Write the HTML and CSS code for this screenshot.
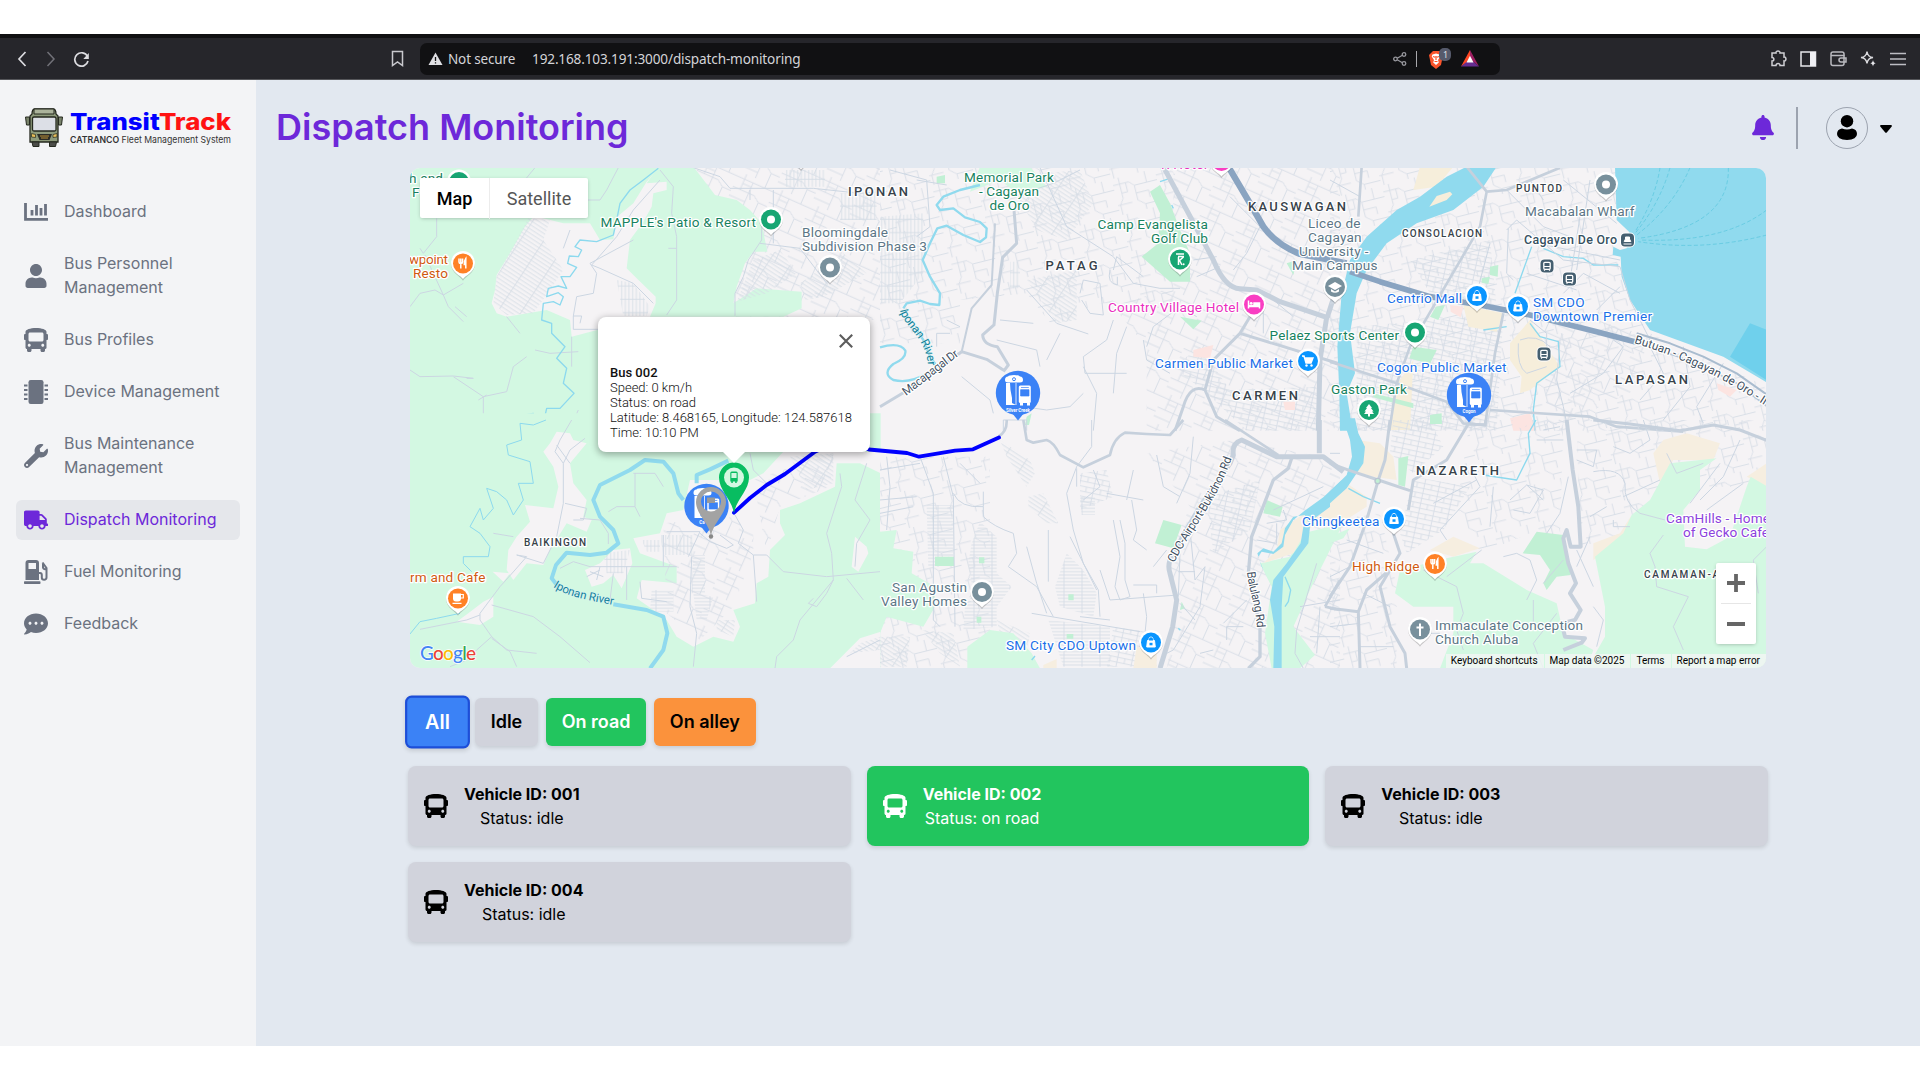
FILE: index.html
```html
<!DOCTYPE html>
<html lang="en">
<head>
<meta charset="utf-8">
<title>TransitTrack - Dispatch Monitoring</title>
<link rel="stylesheet" href="styles.css">
</head>
<body>
<svg class="defs" width="0" height="0">
  <defs>
    <symbol id="i-bus" viewBox="0 0 512 512"><path fill="currentColor" d="M488 128h-8V80c0-44.800-99.200-80-224-80S32 35.200 32 80v48h-8c-13.250 0-24 10.740-24 24v80c0 13.250 10.750 24 24 24h8v160c0 17.670 14.330 32 32 32v32c0 17.670 14.330 32 32 32h32c17.670 0 32-14.330 32-32v-32h192v32c0 17.670 14.330 32 32 32h32c17.670 0 32-14.330 32-32v-32h6.400c16 0 25.600-12.800 25.600-25.600V256h8c13.250 0 24-10.750 24-24v-80c0-13.260-10.750-24-24-24zM112 400c-17.670 0-32-14.330-32-32s14.330-32 32-32 32 14.330 32 32-14.330 32-32 32zm16-112c-17.670 0-32-14.330-32-32V128c0-17.670 14.330-32 32-32h256c17.670 0 32 14.330 32 32v128c0 17.670-14.330 32-32 32H128zm272 112c-17.670 0-32-14.330-32-32s14.330-32 32-32 32 14.330 32 32-14.330 32-32 32z"/></symbol>
    <g id="drop"><path d="M0 16.500C-2 12.500-12 9-12-.5A12 12 0 0 1 12-.5C12 9 2 12.500 0 16.500z" fill="#00000030" transform="translate(0 .8)"/><path d="M0 15.500C-2 12-12 9-12-.5A12 12 0 0 1 12-.5C12 9 2 12 0 15.500z" fill="#fff"/><circle r="10" fill="currentColor"/></g>
    <g id="p-dot"><use href="#drop"/><circle r="4" fill="#fff"/></g>
    <g id="p-food"><use href="#drop"/><path d="M-4-5v3.500q0 1.500 1.800 1.500t1.800-1.500V-5M-2.200-5V5M2.800 5V-5Q1.300-3 1.300 1h1.500" fill="none" stroke="#fff" stroke-width="1.500"/></g>
    <g id="p-shop"><use href="#drop"/><path d="M-4.300 4.500l.8-6.500h7l.8 6.500zM-2-2v-1.500a2 2 0 0 1 4 0V-2" fill="#fff" stroke="#fff"/><path d="M-2-2v-1.200a2 2 0 0 1 4 0V-2z" fill="currentColor"/><path d="M-1.500.300h3v2.500h-3z" fill="currentColor"/></g>
    <g id="p-cart"><use href="#drop"/><path d="M-6-5h2l2 7h5l2-5h-8" fill="#fff" stroke="#fff" stroke-width="1.400"/><circle cx="-1.500" cy="4.500" r="1.200" fill="#fff"/><circle cx="3.500" cy="4.500" r="1.200" fill="#fff"/></g>
    <g id="p-bed"><use href="#drop"/><path d="M-5.500-4V4M-5.500 2h11V4M5.500 3v-4.500H0V1h-5" fill="none" stroke="#fff" stroke-width="1.500"/><path d="M0-1.500h5.500V2H0z" fill="#fff"/><circle cx="-2.800" cy="-1.200" r="1.400" fill="#fff"/></g>
    <g id="p-school"><use href="#drop"/><path d="M-7-1L0-5 7-1 0 3z M-4 2v2.500q4 2.500 8 0V2L0 4.400z" fill="#fff"/></g>
    <g id="p-tree"><use href="#drop"/><path d="M0-6l3 4H2l2.500 3.500H3L5 4H1v2.500h-2V4h-4l2-2.500h-1.500L-2-2h-1z" fill="#fff"/></g>
    <g id="p-cross"><use href="#drop"/><path d="M0-6V6.500M-3.500-2h7" stroke="#fff" stroke-width="2"/></g>
    <g id="p-cup"><use href="#drop"/><path d="M-5-5h8v5q0 3-3 3h-2q-3 0-3-3zM-5.500 4.300h9v1.200h-9z" fill="#fff"/><path d="M3-4h2.300v3.500H3" fill="none" stroke="#fff" stroke-width="1.200"/></g>
    <g id="p-golf"><use href="#drop"/><path d="M-4-5.500h8M-2-3h6M-1.500-2.500V5.500M3.500-2.500l-4 3.500 2.500 4.500" fill="none" stroke="#fff" stroke-width="1.500"/><circle cx="3.600" cy="4.800" r="1" fill="#fff"/></g>
    <g id="stop"><rect x="-7.500" y="-7.500" width="15" height="15" rx="5" fill="#fff"/><rect x="-6.500" y="-6.500" width="13" height="13" rx="4" fill="#455f70"/><rect x="-3.200" y="-3.700" width="6.400" height="7" rx="1" fill="none" stroke="#fff" stroke-width="1.300"/><path d="M-3 .5h6M-2.500 3.500v1.200M2.500 3.500v1.200" stroke="#fff" stroke-width="1.200"/></g>
    <g id="terminal"><path d="M-6 20L0 27.500 6 20z" fill="#3b82f6"/><circle r="22.200" fill="#3b82f6"/><path d="M-13-13q0-3.500 3-3.500 1-1.500 6-1.500t6 1.500q3 0 3 3.500 0 2.500-3 2.500H-10q-3 0-3-2.500zM-12-10h4q0 7 2 15v5l4 2h-10z" fill="#fff"/><path d="M-2-10V12" stroke="#fff" stroke-width=".8"/><circle cx="-4" cy="-13.800" r="1.500" fill="none" stroke="#3b82f6"/><rect x=".8" y="-7.500" width="12" height="17.500" rx="1.500" fill="#fff"/><path d="M3-5.500h7.800M2.600-3.300h8.400V3H2.600z" fill="#3b82f6" stroke="#3b82f6" stroke-width=".7"/><path d="M2 10h3v2.500H2zM9 10h3v2.500H9z" fill="#fff"/></g>
    <pattern id="streets" width="132" height="112" patternUnits="userSpaceOnUse" patternTransform="rotate(-14)"><path d="M0 20h48l14 14h70M20 0v64l-12 18v30M62 34v46l20 16v16M0 82h44M82 96h50M100 0v34M62 58h38v22M38 20v28h-18" class="st"/></pattern>
    <pattern id="streets2" width="118" height="96" patternUnits="userSpaceOnUse" patternTransform="rotate(24)"><path d="M0 16h118M0 50h70l20 14h28M24 0v50M52 16v80M90 64v32M90 0v16M24 30h28M0 78h52" class="st"/></pattern>
    <pattern id="town" width="44" height="30" patternUnits="userSpaceOnUse" patternTransform="rotate(12)"><path d="M0 8h44M0 23h44M10 0v30M32 8v15" class="st"/></pattern>
    <pattern id="hatch" width="60" height="11" patternUnits="userSpaceOnUse" patternTransform="rotate(33)"><path d="M0 5h60M14 0v11" class="st"/></pattern>
    <pattern id="rows" width="54" height="10" patternUnits="userSpaceOnUse"><path d="M0 5h54M12 0v10" class="st"/></pattern>
    <pattern id="cols" width="11" height="40" patternUnits="userSpaceOnUse"><path d="M5 0v40M0 18h11" class="st"/></pattern>
    <path id="t-river1" d="M900 310C902 325 927 338 928 366"/>
    <path id="t-river2" d="M553 587C570 598 590 600 618 606"/>
    <path id="t-macapagal" d="M906 396L962 353"/>
    <path id="t-airport" d="M1174 563C1192 528 1218 500 1232 457"/>
    <path id="t-balulang" d="M1247 572C1248 588 1256 605 1257 630"/>
    <path id="t-butuan" d="M1634 343C1690 360 1735 385 1776 413"/>
  </defs>
</svg>

<header class="chrome">
  <div class="chrome-left">
    <svg width="10" height="16" viewBox="0 0 10 16"><path d="M8.500 1L2 8l6.500 7" fill="none" stroke="#dcdce0" stroke-width="1.700"/></svg>
    <svg width="10" height="16" viewBox="0 0 10 16"><path d="M1.500 1L8 8l-6.500 7" fill="none" stroke="#717178" stroke-width="1.500"/></svg>
    <svg width="17" height="16" viewBox="0 0 17 16"><path d="M14.500 5.500A6.700 6.700 0 1 0 15 10" fill="none" stroke="#dcdce0" stroke-width="1.700"/><path d="M15.800 2v6h-5.500z" fill="#dcdce0"/></svg>
  </div>
  <svg class="bookmark" width="13" height="17" viewBox="0 0 13 17"><path d="M1.500 1.500h10v14l-5-3.500-5 3.500z" fill="none" stroke="#c9c9ce" stroke-width="1.500"/></svg>
  <div class="address">
    <svg width="15" height="14" viewBox="0 0 15 14"><path d="M7.500 0.500L14.500 13h-14z" fill="#e0e0e4"/><path d="M7.500 5v4M7.500 10.200v1.400" stroke="#111" stroke-width="1.300"/></svg>
    <span class="insecure">Not secure</span>
    <span class="url">192.168.103.191:3000/dispatch-monitoring</span>
    <svg class="share" width="14" height="14" viewBox="0 0 14 14" fill="none" stroke="#98989e" stroke-width="1.300"><circle cx="2.500" cy="7" r="1.800"/><circle cx="11" cy="2.500" r="1.800"/><circle cx="11" cy="11.500" r="1.800"/><path d="M4.200 6.200L9.400 3.300M4.200 7.800l5.200 2.900"/></svg>
    <i class="bar"></i>
    <svg width="24" height="22" viewBox="0 0 24 22"><path d="M3 5l2-2h7l2 2 1 2-2 10-5 4-5-4L1 7z" fill="#fb542b"/><path d="M4.500 6.500l3.500-1 3.500 1 .8 2-2.300 3.500.8 2.500L8 17l-2.800-2.500.8-2.500-2.300-3.500z" fill="#fff"/><path d="M5 8.500l2.200.8M11 8.500l-2.200.8M8 8v4M6.500 13.500h3" stroke="#fb542b" stroke-width="1.200"/><rect x="11" y="0" width="12" height="13" rx="5" fill="#565a6b"/><text x="15" y="10" font-size="9" fill="#dfe0e6">1</text></svg>
    <svg class="bat" width="18" height="17" viewBox="0 0 18 17"><path d="M9 0L0 16.500 9 10z" fill="#ff4724"/><path d="M9 0l9 16.500L9 9z" fill="#9e1f63"/><path d="M0 16.500h18L9 9z" fill="#662d91"/><path d="M9 5.800l3.500 6.700h-7z" fill="#fff"/></svg>
  </div>
  <div class="chrome-right">
    <svg width="17" height="17" viewBox="0 0 17 17" fill="none" stroke="#cfcfd4" stroke-width="1.500"><path d="M2 3h4c-.5-2.600 4.500-2.600 4 0h4v4c2.600-.5 2.600 4.500 0 4v4.500h-4c.2-2.600-3.800-2.600-4 0H2V11c2.500 0 2.500-3.500 0-3.500z"/></svg>
    <svg width="17" height="16" viewBox="0 0 17 16"><rect x="1" y="1" width="14.500" height="14" fill="none" stroke="#e8e8ec" stroke-width="1.500"/><path d="M10 1h5.500v14H10z" fill="#f0f0f4"/></svg>
    <svg width="17" height="16" viewBox="0 0 17 16" fill="none" stroke="#b9b9bf" stroke-width="1.500"><rect x="1" y="1" width="13" height="13.500" rx="2"/><path d="M1 4.500h13.500M16 7h-5q-2 0-2 2t2 2h5z"/></svg>
    <svg width="17" height="17" viewBox="0 0 17 17"><path d="M7 1.500q.7 5.500 6 6-5.300.5-6 6-.7-5.500-6-6 5.300-.5 6-6z" fill="none" stroke="#dadade" stroke-width="1.400"/><path d="M13 10q.4 3 3 3.200-2.600.3-3 3.300-.4-3-3-3.300 2.600-.2 3-3.200z" fill="#e8e8ec"/></svg>
    <svg width="16" height="14" viewBox="0 0 16 14"><path d="M0 1.500h16M0 7h16M0 12.500h16" stroke="#bdbdc3" stroke-width="1.500"/></svg>
  </div>
</header>

<div class="app">
  <aside class="sidebar">
    <svg class="logo" width="210" height="42" viewBox="24 106 210 42">
      <path d="M32 114q0-5 3-5h18q3 0 3 5l2 2v26H30v-26z" fill="#8d9a7b" stroke="#25291f" stroke-width="1.300"/>
      <path d="M34 109h20v5H34z" fill="#abb39b" stroke="#25291f"/>
      <path d="M25.500 117h4v8h-3zM62.500 117h-4v8h3z" fill="#79836b" stroke="#25291f"/>
      <rect x="32.500" y="117" width="23.500" height="14" rx="1.500" fill="#dcdfe6" stroke="#25291f" stroke-width="1.300"/>
      <path d="M37 134h15l-2.500 6h-10z" fill="#2b2c27"/><path d="M40 136h9M41 138h7" stroke="#bd8f36"/>
      <path d="M31.500 133.500l4 1v3l-4-.5zM57 133.500l-4 1v3l4-.5z" fill="#e9bf59" stroke="#25291f" stroke-width=".7"/>
      <path d="M32 142h7v4.500h-6zM49.500 142h7l-1 4.500h-6z" fill="#4b4c48" stroke="#25291f"/>
      <text x="70" y="130.300" class="brand" textLength="161" lengthAdjust="spacingAndGlyphs"><tspan fill="#0000ff">Transit</tspan><tspan fill="#ff1212">Track</tspan></text>
      <text x="70" y="142.500" class="tagline" textLength="161" lengthAdjust="spacingAndGlyphs"><tspan font-weight="600">CATRANCO</tspan> Fleet Management System</text>
    </svg>
    <nav>
      <a><svg viewBox="0 0 24 24"><path d="M1.500 3v16.300H24M8 10v5.500M12.500 5v10.500M17 8v7.500M21.500 4v11.500" fill="none" stroke="currentColor" stroke-width="2.800"/></svg><span>Dashboard</span></a>
      <a><svg viewBox="-32 0 512 512"><path fill="currentColor" d="M224 256c70.700 0 128-57.300 128-128S294.700 0 224 0 96 57.300 96 128s57.300 128 128 128zm89.600 32h-16.700c-22.200 10.200-46.900 16-72.900 16s-50.600-5.800-72.900-16h-16.700C60.200 288 0 348.200 0 422.400V464c0 26.500 21.500 48 48 48h352c26.500 0 48-21.500 48-48v-41.600c0-74.200-60.200-134.400-134.400-134.400z"/></svg><span>Bus Personnel Management</span></a>
      <a><svg><use href="#i-bus"/></svg><span>Bus Profiles</span></a>
      <a><svg viewBox="0 0 24 24"><rect x="4.500" width="15" height="24" rx="2.200" fill="currentColor"/><path d="M0 5.500h3.500M0 10h3.500M0 14.500h3.500M0 19h3.500M20.500 5.500H24M20.500 10H24M20.500 14.500H24M20.500 19H24" stroke="currentColor" stroke-width="2.200"/></svg><span>Device Management</span></a>
      <a><svg viewBox="0 0 512 512"><path fill="currentColor" d="M507.730 109.100c-2.240-9.030-13.540-12.090-20.120-5.510l-74.360 74.360-67.880-11.310-11.310-67.880 74.360-74.360c6.620-6.620 3.430-17.900-5.660-20.160-47.380-11.740-99.550.91-136.580 37.930-39.640 39.640-50.550 97.100-34.050 147.200L18.740 402.760c-24.990 24.990-24.990 65.510 0 90.500 24.990 24.990 65.510 24.990 90.500 0l213.210-213.210c50.120 16.710 107.470 5.680 147.370-34.220 37.070-37.070 49.700-89.320 37.910-136.730zM64 472c-13.250 0-24-10.750-24-24 0-13.260 10.750-24 24-24s24 10.740 24 24c0 13.250-10.750 24-24 24z"/></svg><span>Bus Maintenance Management</span></a>
      <a class="active"><svg viewBox="0 0 640 512"><path fill="currentColor" d="M624 352h-16V243.900c0-12.700-5.100-24.900-14.100-33.900L494 110.100c-9-9-21.200-14.100-33.900-14.100H416V48c0-26.500-21.500-48-48-48H48C21.500 0 0 21.500 0 48v320c0 26.500 21.500 48 48 48h16c0 53 43 96 96 96s96-43 96-96h128c0 53 43 96 96 96s96-43 96-96h48c8.800 0 16-7.200 16-16v-32c0-8.800-7.200-16-16-16zM160 464c-26.500 0-48-21.500-48-48s21.500-48 48-48 48 21.500 48 48-21.500 48-48 48zm320 0c-26.500 0-48-21.500-48-48s21.500-48 48-48 48 21.500 48 48-21.500 48-48 48zm80-208H416V144h44.100l99.900 99.900V256z"/></svg><span>Dispatch Monitoring</span></a>
      <a><svg viewBox="0 0 24 24"><path fill="currentColor" fill-rule="evenodd" d="M1.500 20V3q0-3 3-3H12q3 0 3 3v17zM4.500 3v6H12V3zM.7 21.200h15q.8 0 .8.700v1.400q0 .7-.8.700H.7q-.7 0-.7-.7v-1.400q0-.7.700-.7z"/><path d="M15 13h1q1.800 0 1.800 2v2.500q0 2.200 2.300 2.200t2.400-2.200V8L18.500 2.500M19 4v3.500q.5 2 3.500 2" fill="none" stroke="currentColor" stroke-width="2"/></svg><span>Fuel Monitoring</span></a>
      <a><svg viewBox="0 0 512 512"><path fill="currentColor" d="M256 32C114.600 32 0 125.100 0 240c0 49.600 21.400 95 57 130.700C44.500 421.100 2.700 466 2.200 466.500c-2.200 2.300-2.800 5.700-1.500 8.700S4.800 480 8 480c66.300 0 116-31.800 140.600-51.400 32.700 12.300 69 19.400 107.400 19.400 141.400 0 256-93.100 256-208S397.400 32 256 32zM128 272c-17.700 0-32-14.300-32-32s14.300-32 32-32 32 14.300 32 32-14.300 32-32 32zm128 0c-17.700 0-32-14.300-32-32s14.300-32 32-32 32 14.300 32 32-14.300 32-32 32zm128 0c-17.700 0-32-14.300-32-32s14.300-32 32-32 32 14.300 32 32-14.300 32-32 32z"/></svg><span>Feedback</span></a>
    </nav>
  </aside>

  <main>
    <div class="topbar">
      <h1>Dispatch Monitoring</h1>
      <div class="account">
        <svg width="22" height="25" viewBox="0 0 448 512"><path fill="#6d28d9" d="M224 512c35.320 0 63.970-28.650 63.970-64H160.030c0 35.350 28.650 64 63.970 64zm215.390-149.710c-19.320-20.760-55.470-51.990-55.470-154.290 0-77.700-54.480-139.900-127.940-155.160V32c0-17.670-14.320-32-31.980-32s-31.980 14.330-31.980 32v20.840C118.560 68.100 64.080 130.300 64.080 208c0 102.300-36.150 133.530-55.470 154.290-6 6.450-8.660 14.160-8.610 21.710.11 16.400 12.980 32 32.100 32h383.800c19.120 0 32-15.600 32.100-32 .05-7.550-2.610-15.270-8.610-21.710z"/></svg>
        <i class="rule"></i>
        <span class="avatar"><svg width="20" height="25" viewBox="0 0 20 25"><circle cx="10" cy="6.200" r="6.200"/><path d="M5 13.500q5 2 10 0 5 .8 5 5.500 0 5.500-10 6-10-.5-10-6 0-4.700 5-5.500z"/></svg></span>
        <svg class="caret" width="12" height="8" viewBox="0 0 12 8"><path d="M1 0h10q1.500.5.500 1.800L7 7.300q-1 1-2 0L.5 1.800Q-.5.500 1 0z"/></svg>
      </div>
    </div>

    <section class="map">
      <svg class="canvas" width="1356" height="500" viewBox="410 168 1356 500">
        <rect x="410" y="168" width="1356" height="500" fill="#f5f3f5"/>
        <!-- north-west: hills and river -->
        <g transform="translate(400 160) scale(.33333)">
          <path fill="url(#streets2)" d="M880 20H1440V480H1000V250z"/>
          <path class="park" d="M30 20H780L740 65 700 130 650 172 640 238 600 240 570 190 490 190 430 175 400 170 375 200 330 280 290 345 285 390 275 430 290 460 320 470 440 450 510 480 515 530 600 508V812H30z"/>
          <path class="park" d="M775 20H880L915 65 945 105 1010 120 1050 150 1085 190 1102 275H1060L1035 310 1010 380 1000 430 1070 385 1205 395V445L1150 470H750L767 430V410L700 345 680 325 690 240 730 185 755 140 760 100 800 90V65L740 70z"/>
          <path fill="url(#hatch)" d="M385 175L450 180 430 240 490 330 460 375 400 460 320 465 280 430 290 350z"/>
          <path fill="url(#cols)" d="M650 360L700 370 750 440 740 468H670zM1155 30h120v50h-120zM1320 100h110v80h-110z"/>
          <path fill="url(#hatch)" d="M1060 300L1140 270 1190 340 1100 400 1010 425zM1200 370L1330 280 1400 340 1270 410 1215 420z"/>
          <path class="road1" d="M405 23L350 90M655 23L620 90 600 120 560 120M110 175V230L70 280 60 265M75 285L130 405 105 390 60 400 30 440M130 405L190 370M130 405L145 440 190 485M165 440L200 470M320 470L360 520M30 630L60 650 160 648 220 655 200 655M160 650L250 710 320 695 340 620 380 590M250 710L250 790M235 720L260 705M405 570L450 580 535 575M595 508H520V468H545L540 490M520 468L530 410 580 400 590 340 570 310 700 240M780 30L820 80 815 160 830 230 830 420 800 465M830 265H805M1085 190V240L1045 300 1030 350 1005 400V467M880 23L960 50 990 85H1240L1380 100 1440 95M1050 90V120M1120 90V250M1080 250L1200 265 1280 370M780 60L700 150 650 230 575 315 600 325 700 370 760 430M515 530V620M535 750L510 805M490 265L510 210"/>
          <path class="creek" d="M775 25L730 60 690 90 660 130 650 180 640 225 590 245 540 240 525 260 545 270 535 290 508 288 503 310 530 322 510 350 483 350 500 385 475 378 445 385 440 410 475 398 490 410 480 435 460 425 430 430 425 480 455 490 455 520 495 560 470 595 500 625 490 670 522 700 480 745 440 745 430 790 400 785 400 760 375 765 390 785 340 808"/>
        </g>
        <!-- north-centre: Patag and Carmen -->
        <g transform="translate(880 160) scale(.33333)">
          <path fill="url(#streets)" d="M0 20H880V430H650L520 500 440 400 240 420 240 550H0z"/>
          <path fill="url(#streets2)" d="M880 20H1380V812H800V560L700 440 880 380z"/>
          <path fill="url(#hatch)" d="M440 360L590 330 590 480 530 490zM380 50L600 30 640 130 560 240 470 210z"/>
          <path fill="url(#cols)" d="M390 305h30v80h-30zM0 170l130-10v180L60 430H0z"/>
          <path fill="url(#town)" d="M880 620L960 560 1050 690 1310 680V812H1100L980 700z"/>
          <path class="park" d="M300 20H450L500 80 410 100 360 60 270 95z"/>
          <path class="park2" d="M170 50L195 45V70H170zM810 95L840 75 870 130 900 210 930 280V365H870L785 290 835 250 840 160zM900 470L965 482 940 508zM1220 310L1250 300 1240 345zM440 770l15-10-8 35h-12z"/>
          <path fill="#fce4e1" d="M940 570L1000 555 990 595 940 590zM1210 725H1245V750H1215z"/>
          <path class="road1" d="M30 30L140 60 150 200 110 230M110 60L200 75M480 23L560 200 700 290 760 370 840 385H900M440 390L530 490 625 522M700 330L710 290 790 350M690 330Q680 370 712 375V350M600 400L610 360 660 370 670 465 630 460 605 420M700 480L680 540 610 590 615 640 740 640M610 620L650 700 640 812M360 480L460 490M350 540L470 570 480 620M500 750L570 740 610 700M245 650L330 720 340 760M430 740L500 750M370 812V780H440V812M800 560L820 500 900 440 950 470M790 540L800 600 870 640M1050 110L1140 200 1100 280 1060 330M1150 450V520M950 350L1020 320M1240 470L1180 420M940 300L1010 290M170 560V520H210M200 480L240 500M430 100L520 70 600 30M540 520L500 600M740 500L710 580 700 700"/>
          <path class="river" style="stroke-width:7" d="M300 75L240 90 190 110 170 135 180 150 220 145 255 172 300 186 320 205 318 232 300 246 250 225 200 197 172 205 150 250 128 300 150 350 180 400 178 435 150 432 120 422 80 430 70 445M110 510L130 540 150 590 172 620M0 562Q60 545 76 572 80 595 40 612 5 640 40 660 90 672 140 640"/>
          <path class="creek" d="M870 55L840 65M875 135l5 10"/>
          <path class="road2" d="M402 150L410 250 368 292 352 400 342 495 308 525Q310 555 352 560L385 615 370 635M245 575L320 598 370 630M0 740L100 680 245 575" style="stroke-width:9"/>
          <path class="road2" style="stroke-width:6" d="M345 190L335 375 275 445 245 575"/>
          <path class="road2" style="stroke-width:9" d="M1110 470L1080 520 1000 600 975 690 1010 770 1080 812M1080 520L1250 572 1380 612M975 690Q930 670 910 740L885 812"/>
          <path class="road2" style="stroke-width:15" d="M850 20L920 150 1000 300Q1035 385 1080 386L1130 390 1200 425 1340 472 1320 600 1315 812M1365 400L1342 472"/>
          <path class="hwy" style="stroke-width:19" d="M1045 20L1110 130 1150 200Q1190 255 1260 282L1400 310"/>
        </g>
        <!-- north-east: city centre and bay -->
        <g transform="translate(1330 160) scale(.33333)">
          <path fill="url(#streets)" d="M0 20H860V270L960 520 1310 680V812H0z"/>
          <path fill="url(#town)" d="M80 500L520 460 500 812H80zM240 300L480 240 500 440 300 400z"/>
          <path fill="url(#streets2)" d="M640 430L960 530 900 700 650 812z"/>
          <path fill="#f6eedb" d="M400 435L520 460 500 515 415 500zM540 550L600 480 650 560 690 620 600 690 570 700 575 650 540 600zM270 20H370L320 80 250 90zM190 690L250 600 240 810H180z"/>
          <path class="park2" d="M250 560L320 570 300 612 238 595zM318 440L345 435 325 480 300 470zM480 320L505 315 503 350 480 345zM455 355L480 350 475 372 455 368zM300 765L335 760V792H300zM130 700L250 730V745L130 712z"/>
          <path fill="#fce4e1" d="M360 435L400 440 392 472 362 455zM1160 670L1220 690 1200 710 1165 690zM540 775L600 760 620 812H550z"/>
          <path class="water" d="M500 20L460 80 370 150 260 190 170 250 110 330 80 400 60 520 75 640 50 700 68 812H30L28 700 22 560 35 400 60 300 110 230 200 150 270 110 350 50 410 20z"/>
          <path fill="#f6eedb" d="M298 140L320 108 360 95 367 103 350 120z"/>
          <path class="water" d="M855 20H1312V668L1180 590 960 510 900 420 875 350 872 290 848 285 850 260 870 270 890 265 897 215 860 180z"/>
          <path fill="#6fd0ec" d="M1312 510L1260 490 1200 590 1312 662z"/>
          <path fill="none" stroke="#62c9e0" stroke-width="2.500" stroke-dasharray="12 7" d="M990 23Q975 120 915 215M1020 23Q990 130 915 220M1080 23Q1030 140 920 225M1195 23Q1200 200 925 235M1310 150Q1180 250 930 240M1310 225Q1120 275 925 245"/>
          <path class="creek" d="M605 260L555 400M640 265L700 290 760 295 790 315 865 315M600 490L630 530 685 545 690 620 620 670 610 750 615 812M460 510L530 500"/>
          <path class="road1" d="M530 90L590 150 640 200 720 230M530 210L560 180 700 300 870 320 900 420 960 540M535 205L530 340 550 360M480 250L440 400M590 340L740 390M750 170L720 360M780 60L740 330M700 60L860 190M870 400L760 340 700 400M620 250L870 300M870 380L800 450M960 560L1000 640 930 720M850 540L880 560 820 640 720 700M560 100L600 60 640 120M90 110L0 60M690 545L680 660 700 740 715 812M570 540Q620 520 660 560M565 550Q560 620 590 640L650 620M600 480L650 520 650 560M1060 560L1080 680 1000 780M1180 610L1100 740 1120 790"/>
          <path class="road2" style="stroke-width:8" d="M470 95L450 200 380 320 240 560 200 670 178 812M410 20L470 95 530 90 690 23M520 460L495 580 465 800M95 20L85 170M0 605L200 670 350 725M480 750L780 770 860 800 1060 815M350 725L400 790 470 795"/>
          <path class="hwy" style="stroke-width:17" d="M60 335L150 365 300 410 450 435 600 465 800 515 920 547"/>
          <path class="hwy" style="stroke-width:6;stroke:#a9bccf" d="M920 520L1020 550 1120 590 1220 640 1312 705"/>
          <path class="hwy" style="stroke-width:5;stroke:#b7c6d5" d="M920 547L1100 610 1220 670 1312 740"/>
        </g>
        <!-- south-west: Baikingon -->
        <g transform="translate(400 420) scale(.33333)">
          <path class="park" d="M30 -20H1442V746H30z"/>
          <g id="sw-land" fill="#f5f3f5"><path d="M470 35L510 40 520 60 560 70 510 130 520 190 560 240 550 290 575 300 560 335 500 310 450 390 430 435 380 430 340 480 320 450 325 390 350 350 390 305 375 255 460 265 475 200 460 140 430 95 450 70zM278 455L330 460 310 485zM280 530V590L240 615 170 605 205 580 250 545zM555 450L600 430 640 390 690 385 697 430 665 505 640 465 610 490 575 500zM700 355L780 340 800 280 850 270 870 180H1050L1090 160 1150 95H1442V160L1380 130H1310L1305 200 1200 250 1140 270V310L1155 345 1110 390 1105 470 1070 490 1065 550 1000 570 1020 620 1000 665 940 650 880 680 830 650 800 600 760 570 710 535 725 480 830 490V440L720 400zM1365 350L1400 380 1405 400 1375 455 1355 440zM1290 745L1380 655 1442 635V745z"/></g>
          <path fill="url(#streets2)" d="M790 310L1000 290 1060 340 1060 400 1000 560 900 660 800 580zM1060 180L1300 100 1290 200 1140 260 1100 400z"/>
          <path fill="url(#cols)" d="M780 345H880V405H790zM725 360H780V395H740zM610 400L690 390 670 460H620z"/>
          <path fill="url(#rows)" d="M755 510H820V575H750zM880 405H915V520H875zM880 520L940 530 920 600H890z"/>
          <path fill="url(#hatch)" d="M1170 110L1300 100 1300 190 1220 210zM950 600L1005 600 1000 650 950 630zM1310 740L1380 670 1440 650V690L1350 700z"/>
          <path class="road1" d="M515 0L480 60 465 95 490 130 490 250 470 350 430 430 350 405 380 410 345 450 300 500 240 580 240 600 275 650 230 690 200 720 150 740M555 55L510 90 490 130M495 250L560 265 550 300 520 300M540 295L600 300 625 340V372M275 655L330 695 350 740M275 650L320 690 410 700M275 555L400 590 480 650 570 728M240 585L200 600 60 628M700 160H765L790 200M705 160V260H650L625 275M705 260L720 290M480 445L520 425 570 440H830M680 440V540M640 460L630 540M790 345V440M570 455L610 470M560 470L600 450M800 335H900L865 410M900 340L930 365 980 385 1000 375 960 345M1005 285L1030 330 1015 370 1060 405 1100 405 1150 455 1280 470 1440 455M1060 405L1070 545M1320 160L1325 200 1280 340 1295 400 1300 480 1280 520 1250 560 1225 550 1240 535M1300 480L1200 600 1180 660 1130 710 1125 745M875 410L870 560 890 640 880 740M1400 130L1365 240 1410 300 1370 370 1365 440M1340 475L1390 540M1440 660L1340 710M720 485L725 535 800 545M590 480L600 440M1050 100L1060 150 1100 190M470 75L510 130M340 350L280 340"/>
          <path class="creek" style="stroke-width:3" d="M438 0L400 15 360 10 365 60 320 75 325 105 390 125 400 190 355 190 370 240 340 285 320 240 290 215 260 205 280 265 250 300 240 265 210 320 240 340 270 380 265 410 190 410 190 430 215 455M180 580L110 595 60 605 30 642"/>
          <path class="river" style="stroke-width:12" d="M850 240L835 220 820 160 790 125 735 120 690 150 600 195 580 240 600 290 640 330 655 370 620 398 570 405 500 398 468 435 455 475 475 500M890 190V165L930 148 985 122M640 553L740 570 790 590 802 640 790 690 750 745"/>
        </g>
        <!-- south-centre: uptown -->
        <g transform="translate(880 420) scale(.33333)">
          <path fill="#f5f3f5" d="M0 95H50V335H0z"/>
          <path fill="url(#streets)" d="M0 110H330V745H0z"/>
          <path fill="url(#streets2)" d="M800 100L1060 60 1380 120V745H860L900 540 860 420 930 260z"/>
          <path fill="url(#rows)" d="M140 255H220V440H145zM300 305L350 350 350 460 395 500 350 560V620L250 630 255 560 280 520 265 430 275 370zM560 400L610 450 650 520 640 590 540 560 525 500zM505 600L690 620V740H550zM600 230H645V285H605z"/>
          <path fill="url(#hatch)" d="M360 60L450 120 465 160 440 200 380 110zM445 230L490 220 535 310 500 310 445 260zM0 650L90 650 80 740H0zM350 600L450 640 440 690 360 640zM125 630L220 640 240 740 180 700z"/>
          <path fill="url(#town)" d="M600 160L680 150 700 230 600 270zM700 620L830 640V740H680zM980 230L1140 180 1110 330 1000 400z"/>
          <path class="park" d="M0 335L50 330 40 385 100 395 95 460 165 500V560L130 620 20 590 0 640zM262 745V680L330 630 400 640 455 700 480 745zM1140 430L1230 410 1270 340 1390 310 1290 510 1240 620 1305 705 1260 745H1175L1155 640 1175 500z"/>
          <path fill="#f6eee0" d="M1385 215L1300 262 1200 330 1190 390 1150 430 1240 400 1280 330 1385 280zM770 680L830 690 830 745H760zM490 735l40-18v28h-40z"/>
          <path class="park2" d="M850 300L905 315 880 385 825 370zM165 410H222V438H165zM1160 240L1208 260 1200 290 1150 280zM297 412h16v18h-16zM290 590h14v18h-14zM565 523h16v18h-16zM560 642h20v14h-20zM905 545l10 20-15 5z"/>
          <path class="road1" d="M20 110L30 200 20 330M120 110L160 220V600L180 620M190 110L220 230 225 620M220 220Q240 265 310 260V290Q340 320 400 340L410 400 385 440 470 500 520 590M310 215V260M440 380L470 490 500 580M505 330V485M635 0V80L590 140 560 220 580 330 610 430 655 510 660 590M570 350L650 510M590 145V200M700 300L720 410 705 500 720 540 750 530M720 300L735 370 735 480 750 530M690 540L895 525M690 540L660 450M760 495H830V520M790 520L800 590 795 640M640 150L660 200 610 240M830 105L850 200 900 230M760 150L740 240M680 220L790 240M755 240L770 330 760 360 800 390M820 440L860 390M940 50L930 160 890 250M900 400L895 530M895 455H945M930 330L945 480 975 440 960 560 880 690 860 700M900 550L945 600M1030 610L1100 540M1040 660V620H1090M960 700L1000 690M455 580L780 635M600 590L690 600M1180 270L1330 200M1160 310L1220 300 1210 270M1130 360L1190 370V310M1310 430L1250 630 1245 700 1270 745M1260 560L1380 540M1320 560L1310 700M1290 650H1380M240 130L300 190M0 240L110 230M0 280L100 260M0 150L120 130"/>
          <path class="road2" style="stroke-width:8" d="M380 0Q382 35 355 50M430 0L440 60 460 68 500 60Q520 65 540 105L610 142 690 105Q700 55 735 38L800 42 870 45 910 0M1035 0L1195 105M1335 560L1380 570M1380 480L1335 560"/>
          <path class="road2" style="stroke-width:15" d="M1318 0V100M1390 155L1330 110H1190L1085 60Q1055 70 1060 105L1050 130 960 260 880 400Q860 430 870 460L890 540 878 620 840 745"/>
          <path class="road2" style="stroke-width:10" d="M1235 115L1225 145 1180 180 1115 350 1105 460 1140 620V710L1105 745"/>
          <path class="water" d="M1385 180L1330 232 1270 275 1240 300 1215 345 1210 380 1180 402 1145 395 1135 410 1150 450 1165 480 1145 440 1132 400 1150 385 1180 395 1205 370 1215 325 1240 290 1275 285 1290 320 1285 370 1240 430 1210 470 1205 560 1205 745H1180L1183 620 1170 540 1180 480 1220 430 1262 370 1270 320 1310 290 1385 235z"/>
          <path class="creek" d="M1215 470L1232 510 1225 545 1215 560M455 720l10-12M895 625l6 6"/>
        </g>
        <!-- south-east: Nazareth and Camaman-an -->
        <g transform="translate(1330 420) scale(.33333)">
          <path fill="url(#streets)" d="M420 0H700L690 350 600 340 450 400 380 260zM740 0H1310V200L1000 200 860 350 750 380zM0 300L150 280 200 500V745H0z"/>
          <path fill="url(#town)" d="M250 170L420 200 340 330 230 400 210 340zM190 0H300L340 80 250 160 180 100z"/>
          <path fill="#f6eee0" d="M80 60L150 70 190 110 200 180 130 170 60 150 90 110zM50 190L110 230 110 260 0 330V240zM970 100L1000 60 1070 40 1170 70 1150 120H1030L990 190zM300 390L370 350 450 385 370 410zM790 420V370L870 340 905 285 880 360zM1250 170L1310 130V200z"/>
          <path class="park" d="M905 285L960 240 1020 130 1160 115 1110 150V210L1060 270 1065 380 1130 388 1200 350 1250 200 1262 170 1312 200V746H770L825 650V560L795 410 880 340zM195 520L210 450 350 415 440 395 420 430 460 430 590 510 680 550 700 640 790 690 770 745H330L370 640V560H250zM0 350L60 325 40 355 0 370z"/>
          <path class="park2" d="M578 400L620 335 700 345 722 465 680 470 650 510 640 490 660 450 630 405zM205 115L235 108 225 200 205 195zM300 0H335V12H300z"/>
          <path fill="#fce4e1" d="M548 0H600L580 28 550 15z"/>
          <path class="water" d="M38 -5L60 60 66 110 50 165 0 215V250L50 205 100 130 105 80 85 40 75 -5z"/>
          <path class="creek" d="M618 0L595 40 600 100 560 180 460 165M55 205L100 230 150 250"/>
          <path class="road1" d="M430 160L450 200 330 330 350 360M490 200L480 320M310 250L440 180M540 240L590 195 640 210 600 280 550 270M590 195L640 240M715 170L690 280 650 340M640 30L690 20M620 60H700M740 90H800L790 140 740 120M790 155Q870 140 885 190 880 250 930 280L1005 300M940 0L960 60 900 100 850 80M880 230L990 180M780 290L830 260M850 300V320H900M780 350L740 440M790 560L820 600 800 680M740 390L790 500M1000 345L960 400 975 440 980 500 1075 530 1030 620 1060 690M1110 240L1180 170 1230 60M1130 270L1240 190M1080 250L1170 130M1010 100L1040 160 1120 130M1310 380L1270 420 1285 520M590 540L620 480 600 420 560 400 520 410M280 450L380 500 400 580 380 630 400 690M455 390L350 470M610 540V610M680 580L610 670 640 745M700 420L640 490M0 100H30M0 470L60 440M0 620L90 610M90 680H190M100 520L180 560M250 640H330M50 360L160 400"/>
          <path class="road2" style="stroke-width:9" d="M180 0L165 120 145 180 110 300 60 440 0 530M0 130L60 152 145 180 240 212M422 0L350 120 250 180 235 270M190 340L210 400 150 500 180 620 225 700 230 745M0 565L85 575 90 745M190 440L110 510 85 575M790 0L900 12 1050 32 1150 15 1230 30 1312 62M415 12L465 15 468 0"/>
          <path class="road2" style="stroke-width:12" d="M710 0L728 150 745 260 752 380H722L710 330 700 355 715 430 738 490 720 520 752 570 735 600 695 610 705 650 765 655 755 668 700 690"/>
          <circle cx="143" cy="183" r="8" class="park2" stroke="#b9c4d0" stroke-width="4"/>
        </g>

        <path d="M734 512.700L750 498 766.700 485 785 474 815 451.700 840 440 869 449.500 907 453 919 456.700 955 450.700 973 449.300 999 437.500" fill="none" stroke="#0000ff" stroke-width="3.800" stroke-linecap="round" stroke-linejoin="round"/>

        <g class="lbl green">
          <text x="409" y="182.500" textLength="34">h and</text><text x="412" y="197">F</text>
          <text x="600.500" y="226.500" textLength="155.500">MAPPLE's Patio &amp; Resort</text>
          <text x="964" y="181.500" textLength="90">Memorial Park</text><text x="979" y="195.500" textLength="60">- Cagayan</text><text x="989.500" y="209.500" textLength="40">de Oro</text>
          <text x="1097.500" y="228.500" textLength="110.500">Camp Evangelista</text><text x="1151" y="242.500" textLength="57">Golf Club</text>
          <text x="1269.500" y="339.500" textLength="129.500">Pelaez Sports Center</text><text x="1331" y="393.500" textLength="76">Gaston Park</text>
        </g>
        <g class="lbl orange"><text x="409" y="264" textLength="39">wpoint</text><text x="413" y="278" textLength="35">Resto</text><text x="410" y="581.500" textLength="75.500">rm and Cafe</text><text x="1352" y="570.500" textLength="67.500">High Ridge</text></g>
        <g class="lbl grey">
          <text x="802" y="236.500" textLength="86">Bloomingdale</text><text x="802" y="250.500" textLength="125">Subdivision Phase 3</text>
          <text x="1308" y="227.500" textLength="52.500">Liceo de</text><text x="1308" y="241.500" textLength="53.500">Cagayan</text><text x="1299" y="255.500" textLength="69.500">University -</text><text x="1292" y="269.500" textLength="85.500">Main Campus</text>
          <text x="1525" y="215.500" textLength="109.500">Macabalan Wharf</text>
          <text x="892" y="591.500" textLength="75">San Agustin</text><text x="881" y="605.500" textLength="86">Valley Homes</text>
          <text x="1435" y="629.500" textLength="148">Immaculate Conception</text><text x="1435" y="643.500" textLength="83.500">Church Aluba</text>
        </g>
        <g class="lbl blue">
          <text x="1155" y="367.500" textLength="138">Carmen Public Market</text><text x="1387" y="302.500" textLength="75">Centrio Mall</text><text x="1533" y="306.500" textLength="51.500">SM CDO</text><text x="1533" y="320.500" textLength="119">Downtown Premier</text>
          <text x="1377" y="371.500" textLength="129.500">Cogon Public Market</text><text x="1006" y="649.500" textLength="130">SM City CDO Uptown</text><text x="1302" y="525.500" textLength="77.500">Chingkeetea</text>
        </g>
        <g class="lbl pink"><text x="1108" y="311.500" textLength="131">Country Village Hotel</text><text x="1161" y="168.500" textLength="46">R Hotel</text></g>
        <g class="lbl purple"><text x="1666" y="522.500" textLength="104">CamHills - Home</text><text x="1683" y="536.500" textLength="86">of Gecko Cafe</text></g>
        <g class="lbl place"><text x="848" y="195.500" textLength="60">IPONAN</text><text x="1045.500" y="269.500" textLength="52">PATAG</text><text x="1248" y="210.500" textLength="98">KAUSWAGAN</text><text x="1232" y="399.500" textLength="66">CARMEN</text><text x="1615" y="383.500" textLength="73">LAPASAN</text><text x="1416" y="474.500" textLength="83">NAZARETH</text></g>
        <g class="lbl small"><text x="1402" y="237" textLength="80">CONSOLACION</text><text x="1516" y="192" textLength="46">PUNTOD</text><text x="524" y="546" textLength="62">BAIKINGON</text><text x="1644" y="578" textLength="84">CAMAMAN-AN</text></g>
        <g class="lbl ferry"><text x="1524" y="244" textLength="93">Cagayan De Oro</text></g>
        <g class="lbl road"><text><textPath href="#t-macapagal" textLength="67">Macapagal Dr</textPath></text><text><textPath href="#t-airport" textLength="120">CDO-Airport-Bukidnon Rd</textPath></text><text><textPath href="#t-balulang" textLength="57">Balulang Rd</textPath></text><text><textPath href="#t-butuan">Butuan - Cagayan de Oro - Il</textPath></text></g>
        <g class="lbl riverlbl"><text><textPath href="#t-river1">Iponan River</textPath></text><text><textPath href="#t-river2">Iponan River</textPath></text></g>

        <g color="#17a673"><use href="#p-dot" x="459" y="182"/><use href="#p-dot" x="771" y="219.500"/><use href="#p-golf" x="1180" y="259.500"/><use href="#p-dot" x="1415" y="332.500"/><use href="#p-tree" x="1369" y="410"/></g>
        <g color="#78909c"><use href="#p-dot" x="801" y="154"/><use href="#p-dot" x="830" y="267.500"/><use href="#p-dot" x="1606" y="184.500"/><use href="#p-school" x="1335" y="287"/><use href="#p-dot" x="982" y="592"/><use href="#p-cross" x="1420" y="629.500"/></g>
        <g color="#ff8126"><use href="#p-food" x="463" y="263.500"/><use href="#p-food" x="1435" y="564"/><use href="#p-cup" x="458" y="598.500"/></g>
        <g color="#f93ec2"><use href="#p-bed" x="1254" y="304.500"/><use href="#p-dot" x="1221.500" y="161"/></g>
        <g color="#0a95ff"><use href="#p-cart" x="1308" y="361"/><use href="#p-shop" x="1477" y="296"/><use href="#p-shop" x="1518" y="306.500"/><use href="#p-shop" x="1151" y="642.500"/><use href="#p-shop" x="1394" y="519"/></g>
        <use href="#stop" x="1547" y="266"/><use href="#stop" x="1569.500" y="279"/><use href="#stop" x="1544" y="354"/>
        <g transform="translate(1627.500 240)"><rect x="-7.500" y="-7.500" width="15" height="15" rx="5" fill="#fff"/><rect x="-6.500" y="-6.500" width="13" height="13" rx="4" fill="#455f70"/><path d="M-4 4h8M-3.300 1.500L-2-1v-2h4v2l1.300 2.500z" fill="#fff" stroke="#fff"/></g>

        <use href="#terminal" x="1018" y="393"/><text x="1018" y="411.500" class="stopname" textLength="24">Silver Creek</text>
        <use href="#terminal" x="1469" y="395"/><text x="1469" y="412.500" class="stopname">Cogon</text>
        <use href="#terminal" x="706.500" y="506"/><text x="702" y="524" class="stopname">Ca</text>
        <g transform="translate(711 501)"><path fill="#a3a3a3" fill-rule="evenodd" d="M0 35C-2 22-15 13-15 1A15 15 0 0 1 15 1C15 13 2 22 0 35zM0-9.500A10 10 0 1 0 0 10.500 10 10 0 0 0 0-9.500z"/><path d="M-4-3.500h8v5.500H-4z" fill="#9a9a9a"/><circle cy="35.500" r="2.200" fill="#888"/></g>
        <g transform="translate(734 477.500)"><path fill="#08bd61" d="M0 36C-2 22-15 13-15 0A15 15 0 0 1 15 0C15 13 2 22 0 36z"/><circle r="10" fill="#d3f8e2"/><path fill="#08bd61" fill-rule="evenodd" d="M-3.700-4.500q0-1.500 1.500-1.500h4.400q1.500 0 1.500 1.500V4h-1v1.500H1.200V4h-2.400v1.500h-1.500V4h-1zM-2.600-4.500V.5h5.200v-5z"/></g>
        <text x="420" y="660" class="google" textLength="56"><tspan fill="#4285f4">G</tspan><tspan fill="#ea4335">o</tspan><tspan fill="#fbbc04">o</tspan><tspan fill="#4285f4">g</tspan><tspan fill="#34a853">l</tspan><tspan fill="#ea4335">e</tspan></text>
      </svg>
      <div class="maptype"><b>Map</b><span>Satellite</span></div>
      <div class="popup">
        <svg class="close" width="14" height="14" viewBox="0 0 14 14"><path d="M.8.800l12.400 12.400M13.200.800L.8 13.200" stroke="#5c5c5c" stroke-width="2.100"/></svg>
        <strong>Bus 002</strong>
        <p>Speed: 0 km/h</p><p>Status: on road</p><p>Latitude: 8.468165, Longitude: 124.587618</p><p>Time: 10:10 PM</p>
      </div>
      <div class="zoomctl"><svg viewBox="0 0 40 40"><path d="M20 11v18M11 20h18" stroke="#666" stroke-width="3.800"/></svg><i></i><svg viewBox="0 0 40 40"><path d="M11 20h18" stroke="#666" stroke-width="3.800"/></svg></div>
      <div class="credits"><span>Keyboard shortcuts</span><span>Map data ©2025</span><span>Terms</span><span>Report a map error</span></div>
    </section>

    <div class="filters">
      <button class="all">All</button><button class="idle">Idle</button><button class="onroad">On road</button><button class="alley">On alley</button>
    </div>
    <section class="vehicles">
      <article><svg><use href="#i-bus"/></svg><div><h2>Vehicle ID: 001</h2><p>Status: idle</p></div></article>
      <article class="moving"><svg><use href="#i-bus"/></svg><div><h2>Vehicle ID: 002</h2><p>Status: on road</p></div></article>
      <article><svg><use href="#i-bus"/></svg><div><h2>Vehicle ID: 003</h2><p>Status: idle</p></div></article>
      <article><svg><use href="#i-bus"/></svg><div><h2>Vehicle ID: 004</h2><p>Status: idle</p></div></article>
    </section>
  </main>
</div>
</body>
</html>
```
FILE: styles.css
```css
* { box-sizing: border-box; margin: 0; padding: 0; }
body { background: #fff; padding-top: 34px; font-family: Inter, "Liberation Sans", sans-serif; font-size: 16px; line-height: 24px; color: #000; overflow: hidden; }
svg { display: block; flex: none; }
.defs { position: absolute; }

.chrome { height: 46px; display: flex; align-items: center; background: #26262b; border-top: 4px solid #101012; border-bottom: 1px solid #55565a; font-family: "Noto Sans", sans-serif; font-size: 14px; color: #d4d4d8; }
.chrome-left { display: flex; align-items: center; gap: 19px; padding-left: 17px; width: 391px; }
.chrome-left svg:last-child { margin-left: -2px; }
.bookmark { margin-right: 16px; }
.address { display: flex; align-items: center; width: 1080px; height: 32px; border-radius: 7px; background: #111113; padding: 0 21px 0 8px; }
.insecure { margin-left: 5px; width: 84px; font-size: 13.500px; letter-spacing: -.15px; }
.url { font-size: 13.600px; letter-spacing: -.15px; }
.share { margin-left: auto; }
.bar { width: 1px; height: 16px; background: #a8a8ac; margin: 0 11px 0 9px; }
.bat { margin-left: 9px; }
.chrome-right { margin-left: auto; display: flex; align-items: center; gap: 13px; padding-right: 14px; }

.app { display: flex; height: 966px; }
.sidebar { width: 256px; background: #f3f4f6; }
.logo { margin: 26px 0 0 24px; }
.brand { font: 800 22.500px Inter, sans-serif; }
.tagline { font: 400 9.300px Inter, sans-serif; fill: #333; }
nav { display: flex; flex-direction: column; gap: 12px; padding: 44px 16px 0; }
nav a { display: flex; align-items: center; gap: 16px; padding: 8px; border-radius: 6px; color: #6b7280; }
nav span { margin-top: -1px; margin-bottom: 1px; }
nav svg { width: 24px; height: 24px; }
nav .active { background: #e5e7eb; color: #6d28d9; }

main { flex: 1; background: #e2e8f0; }
.topbar { height: 88px; display: flex; justify-content: space-between; align-items: center; padding: 7px 28px 0 20px; }
h1 { font-size: 36px; font-weight: 600; line-height: 40px; color: #6d28d9; margin-bottom: 2px; }
.account { display: flex; align-items: center; }
.rule { width: 2px; height: 42px; background: #9ca3af; margin: 0 28px 0 22px; }
.avatar { width: 42px; height: 42px; border: 1px solid #9ca3af; border-radius: 50%; display: flex; align-items: center; justify-content: center; margin-right: 12px; }
.caret { margin-top: 2px; }

.map { position: relative; width: 1356px; height: 500px; margin-left: 154px; border-radius: 10px; overflow: hidden; font-family: Roboto, sans-serif; }
.st { fill: none; stroke: #d6dde6; stroke-width: 2.600; }
.park { fill: #d3f8e2; }
.park2 { fill: #c1f0d4; }
.water { fill: #90daee; }
.river, .creek, .road1, .road2, .hwy { fill: none; stroke-linejoin: round; }
.river { stroke: #90daee; }
.creek { stroke: #8cd9ee; stroke-width: 4; }
.road1 { stroke: #ccd6e2; stroke-width: 3; }
.road2 { stroke: #c6d0dc; }
.hwy { stroke: #8aa4c1; }
.lbl { font: 400 13.600px Roboto, sans-serif; paint-order: stroke; stroke: #fff; stroke-width: 2.500px; stroke-linejoin: round; }
.green { fill: #188260; }
.orange { fill: #d05a10; }
.grey { fill: #5c7686; }
.blue { fill: #1a6fe8; }
.pink { fill: #ea2fc0; }
.purple { fill: #8c42dd; }
.place { font-size: 13px; font-weight: 500; fill: #37424a; }
.small { font-size: 10px; font-weight: 500; fill: #37424a; }
.ferry { font-size: 12.500px; font-weight: 500; fill: #37505f; }
.road { font-size: 11.800px; fill: #3f5061; }
.riverlbl { font-size: 11.500px; fill: #128099; stroke-width: 1px; stroke: #d9f3f5; }
.stopname { font: 700 4.500px Roboto, sans-serif; fill: #fff; text-anchor: middle; }
.google { font: 500 19px Lato, sans-serif; paint-order: stroke; stroke: #fff; stroke-width: 1.500px; }

.maptype { position: absolute; left: 10px; top: 10px; height: 40px; width: 168px; display: flex; align-items: center; background: #fff; border-radius: 2px; box-shadow: 0 1px 4px -1px rgba(0,0,0,.3); font-size: 18px; }
.maptype b { width: 70px; line-height: 41px; text-align: center; font-weight: 500; border-right: 1px solid #ececec; }
.maptype span { width: 98px; line-height: 41px; text-align: center; color: #565656; }
.popup { position: absolute; left: 188px; top: 149px; width: 272px; height: 135px; padding: 47.500px 12px 0; border-radius: 8px; background: #fff; box-shadow: 0 2px 7px 1px rgba(0,0,0,.3); font-size: 13px; font-weight: 300; line-height: 15.100px; color: #111; white-space: nowrap; }
.popup::after { content: ""; position: absolute; left: 124px; top: 134px; border: 12px solid transparent; border-top: 12px solid #fff; border-bottom: 0; }
.popup strong { font-weight: 500; }
.close { position: absolute; left: 241px; top: 17px; }
.zoomctl { position: absolute; left: 1306px; top: 395px; width: 40px; height: 81px; display: flex; flex-direction: column; align-items: center; background: #fff; border-radius: 2px; box-shadow: 0 1px 4px -1px rgba(0,0,0,.3); }
.zoomctl svg { width: 40px; height: 40px; }
.zoomctl i { width: 30px; height: 1px; background: #e6e6e6; }
.credits { position: absolute; right: 0; bottom: 0; height: 14px; display: flex; font-size: 10px; line-height: 14px; white-space: nowrap; }
.credits span { padding: 0 6px 0 5px; background: rgba(245,245,245,.75); margin-left: 1px; }

.filters { display: flex; gap: 8px; padding: 30px 0 0 152px; }
button { height: 48px; padding: 0 15.700px; border: 0; border-radius: 6px; font: 600 18px/28px Inter, sans-serif; color: #000; box-shadow: 0 2px 4px rgba(0,0,0,.12); }
.all { background: #3b82f6; color: #fff; border: 2px solid #1d4ed8; width: 59px; padding: 0; transform: scale(1.1); }
.idle { background: #d1d3dc; }
.onroad { background: #22c55e; color: #fff; }
.alley { background: #fb923c; }
.vehicles { display: grid; grid-template-columns: repeat(3, 1fr); gap: 16px; width: 1360px; margin: 20px 0 0 152px; }
article { height: 80px; display: flex; align-items: center; gap: 16px; padding: 0 16px 1px; border-radius: 8px; background: #d1d3dc; box-shadow: 0 2px 4px rgba(0,0,0,.12); text-align: center; }
article svg { width: 24px; height: 24px; }
h2 { font-size: 16px; font-weight: 700; line-height: 24px; }
.moving { background: #22c55e; color: #fff; }
```
